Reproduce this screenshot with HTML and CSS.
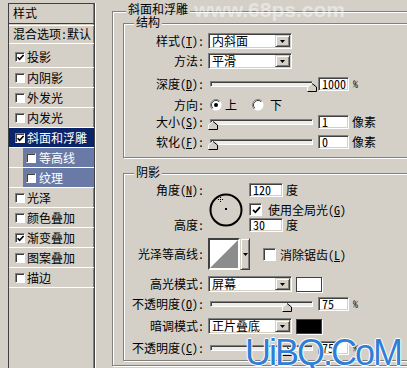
FILE: index.html
```html
<!DOCTYPE html>
<html lang="zh">
<head>
<meta charset="utf-8">
<title>图层样式 - 斜面和浮雕</title>
<link rel="stylesheet" href="styles.css">
</head>
<body>
<div class="dialog">
  <div class="list">
    <div class="list-head">样式</div>
    <div class="item blend">混合选项:默认</div>
    <div class="item tall"><span class="cb"><svg class="chk" width="7" height="7" viewBox="0 0 7 7"><path d="M0.5 3.2 L2.6 5.4 L6.6 1" fill="none" stroke="#000" stroke-width="1.6"/></svg></span>投影</div>
    <div class="item"><span class="cb"></span>内阴影</div>
    <div class="item"><span class="cb"></span>外发光</div>
    <div class="item"><span class="cb"></span>内发光</div>
    <div class="item sel"><span class="cb"><svg class="chk" width="7" height="7" viewBox="0 0 7 7"><path d="M0.5 3.2 L2.6 5.4 L6.6 1" fill="none" stroke="#000" stroke-width="1.6"/></svg></span>斜面和浮雕</div>
    <div class="item sub"><div class="sub-inner"><span class="cb"></span>等高线</div></div>
    <div class="item sub"><div class="sub-inner"><span class="cb"></span>纹理</div></div>
    <div class="item"><span class="cb"></span>光泽</div>
    <div class="item"><span class="cb"></span>颜色叠加</div>
    <div class="item"><span class="cb"><svg class="chk" width="7" height="7" viewBox="0 0 7 7"><path d="M0.5 3.2 L2.6 5.4 L6.6 1" fill="none" stroke="#000" stroke-width="1.6"/></svg></span>渐变叠加</div>
    <div class="item"><span class="cb"></span>图案叠加</div>
    <div class="item"><span class="cb"></span>描边</div>
  </div>

  <div class="main">
    <div class="group outer">
      <div class="legend l-outer">斜面和浮雕</div>

      <div class="group inner struct">
        <div class="legend l-inner">结构</div>

        <div class="row h16 first">
          <div class="lbl">样式(<u>T</u>):</div>
          <div class="select"><span class="sel-text">内斜面</span><span class="btn"><svg width="5" height="3" viewBox="0 0 5 3"><path d="M0 0H5L2.5 3Z"/></svg></span></div>
        </div>
        <div class="row h16 m4">
          <div class="lbl">方法:</div>
          <div class="select"><span class="sel-text">平滑</span><span class="btn"><svg width="5" height="3" viewBox="0 0 5 3"><path d="M0 0H5L2.5 3Z"/></svg></span></div>
        </div>
        <div class="row h14 m8">
          <div class="lbl">深度(<u>D</u>):</div>
          <div class="slider"><div class="track"></div><svg class="thumb" style="left:99px" width="10" height="9" viewBox="0 0 10 9"><path d="M0.5 8.5V4L5 0.5L9.5 4V8.5Z" fill="#d4d0c8"/><path d="M0.5 8.5V4L5 0.5" fill="none" stroke="#fff"/><path d="M5 0.5L9.5 4V8.5H0.5" fill="none" stroke="#000"/></svg></div>
          <div class="num">1000</div>
          <div class="unit pct">%</div>
        </div>
        <div class="row h14 m7">
          <div class="lbl">方向:</div>
          <svg class="radio r-first" width="12" height="12" viewBox="0 0 12 12"><circle cx="6" cy="6" r="5.5" fill="#fff"/><path d="M9.9 2.1A5.5 5.5 0 0 0 2.1 9.9" fill="none" stroke="#808080"/><path d="M9.2 2.8A4.5 4.5 0 0 0 2.8 9.2" fill="none" stroke="#404040"/><circle cx="6" cy="6" r="2" fill="#000"/></svg>
          <span class="rlabel">上</span>
          <svg class="radio r-second" width="12" height="12" viewBox="0 0 12 12"><circle cx="6" cy="6" r="5.5" fill="#fff"/><path d="M9.9 2.1A5.5 5.5 0 0 0 2.1 9.9" fill="none" stroke="#808080"/><path d="M9.2 2.8A4.5 4.5 0 0 0 2.8 9.2" fill="none" stroke="#404040"/></svg>
          <span class="rlabel r2">下</span>
        </div>
        <div class="row h14 m3">
          <div class="lbl">大小(<u>S</u>):</div>
          <div class="slider"><div class="track"></div><svg class="thumb" style="left:0px" width="10" height="9" viewBox="0 0 10 9"><path d="M0.5 8.5V4L5 0.5L9.5 4V8.5Z" fill="#d4d0c8"/><path d="M0.5 8.5V4L5 0.5" fill="none" stroke="#fff"/><path d="M5 0.5L9.5 4V8.5H0.5" fill="none" stroke="#000"/></svg></div>
          <div class="num">1</div>
          <div class="unit">像素</div>
        </div>
        <div class="row h14 m6">
          <div class="lbl">软化(<u>F</u>):</div>
          <div class="slider"><div class="track"></div><svg class="thumb" style="left:0px" width="10" height="9" viewBox="0 0 10 9"><path d="M0.5 8.5V4L5 0.5L9.5 4V8.5Z" fill="#d4d0c8"/><path d="M0.5 8.5V4L5 0.5" fill="none" stroke="#fff"/><path d="M5 0.5L9.5 4V8.5H0.5" fill="none" stroke="#000"/></svg></div>
          <div class="num">0</div>
          <div class="unit">像素</div>
        </div>
      </div>

      <div class="group inner shadow">
        <div class="legend l-inner">阴影</div>

        <div class="angle-grid">
          <div class="lbl ga">角度(<u>N</u>):</div>
          <svg class="dial" width="34" height="34" viewBox="0 0 34 34">
            <circle cx="17" cy="17" r="15.5" fill="none" stroke="#000" stroke-width="2"/>
            <path d="M9 6.5H14M11.5 4V9" stroke="#000" stroke-width="1" stroke-dasharray="1 1"/>
            <rect x="16" y="15" width="2" height="2" fill="#000"/>
          </svg>
          <div class="cell c1"><div class="num n0">120</div><span class="unit">度</span></div>
          <div class="cell c2"><span class="cb big"><svg class="chk" width="9" height="8" viewBox="0 0 9 8"><path d="M1 3.8 L3.4 6.3 L8 1.2" fill="none" stroke="#000" stroke-width="1.8"/></svg></span><span class="cbtext">使用全局光(<u>G</u>)</span></div>
          <div class="lbl gc">高度:</div>
          <div class="cell c3"><div class="num n0">30</div><span class="unit">度</span></div>
        </div>

        <div class="row h32 m6">
          <div class="lbl">光泽等高线:</div>
          <div class="contour"><svg width="28" height="28" viewBox="0 0 28 28"><rect width="28" height="28" fill="#fff"/><path d="M0 28L28 0V28Z" fill="#8c8c8c"/></svg></div>
          <span class="btn tallbtn"><svg width="5" height="3" viewBox="0 0 5 3"><path d="M0 0H5L2.5 3Z"/></svg></span>
          <span class="cb big aa"></span><span class="cbtext">消除锯齿(<u>L</u>)</span>
        </div>
        <div class="row h16 m6">
          <div class="lbl">高光模式:</div>
          <div class="select"><span class="sel-text">屏幕</span><span class="btn"><svg width="5" height="3" viewBox="0 0 5 3"><path d="M0 0H5L2.5 3Z"/></svg></span></div>
          <div class="swatch white"></div>
        </div>
        <div class="row h14 m5">
          <div class="lbl">不透明度(<u>O</u>):</div>
          <div class="slider"><div class="track"></div><svg class="thumb" style="left:74px" width="10" height="9" viewBox="0 0 10 9"><path d="M0.5 8.5V4L5 0.5L9.5 4V8.5Z" fill="#d4d0c8"/><path d="M0.5 8.5V4L5 0.5" fill="none" stroke="#fff"/><path d="M5 0.5L9.5 4V8.5H0.5" fill="none" stroke="#000"/></svg></div>
          <div class="num">75</div>
          <div class="unit pct">%</div>
        </div>
        <div class="row h16 m7">
          <div class="lbl">暗调模式:</div>
          <div class="select"><span class="sel-text">正片叠底</span><span class="btn"><svg width="5" height="3" viewBox="0 0 5 3"><path d="M0 0H5L2.5 3Z"/></svg></span></div>
          <div class="swatch black"></div>
        </div>
        <div class="row h14 m7">
          <div class="lbl">不透明度(<u>C</u>):</div>
          <div class="slider"><div class="track"></div><svg class="thumb" style="left:74px" width="10" height="9" viewBox="0 0 10 9"><path d="M0.5 8.5V4L5 0.5L9.5 4V8.5Z" fill="#d4d0c8"/><path d="M0.5 8.5V4L5 0.5" fill="none" stroke="#fff"/><path d="M5 0.5L9.5 4V8.5H0.5" fill="none" stroke="#000"/></svg></div>
          <div class="num">75</div>
          <div class="unit pct">%</div>
        </div>
      </div>
    </div>
  </div>
</div>
<div class="wm wm68">www.68ps.com</div>
<div class="wm wmuibq">UiBQ.CoM</div>
</body>
</html>
```

FILE: styles.css
```css
* { box-sizing: border-box; }

body {
  margin: 0;
  width: 407px;
  height: 368px;
  overflow: hidden;
  position: relative;
  background: #d4d0c8;
  color: #000;
  font-family: "Noto Sans CJK SC", "Noto Sans", sans-serif;
  font-size: 12px;
  line-height: 14px;
  font-feature-settings: "hwid" 1;
}

u { text-decoration-thickness: 1px; text-underline-offset: 1px; }

.dialog {
  display: flex;
  align-items: flex-start;
  height: 368px;
  overflow: hidden;
}

/* ---------- left style list ---------- */
.list {
  flex: none;
  width: 87px;
  height: 380px;
  margin: 3px 0 0 8px;
  border: 1px solid #404040;
  border-bottom: 0;
  box-shadow: inset -1px 0 0 #808080, 1px 0 0 #fff;
}

.list-head {
  height: 20px;
  padding: 2px 0 0 4px;
  border-bottom: 1px solid #404040;
}

.item {
  display: flex;
  align-items: center;
  height: 20px;
  border-bottom: 1px solid #fff;
}

.item.blend {
  height: 19px;
  margin-top: 1px;
  border-top: 1px solid #fff;
  padding: 0 0 1px 4px;
}

.item.tall {
  height: 24px;
  padding-top: 2px;
}

.cb {
  flex: none;
  display: flex;
  align-items: center;
  justify-content: center;
  width: 10px;
  height: 10px;
  margin: 0 2px 0 6px;
  background: #fff;
  border: 1px solid;
  border-color: #808080 #fff #fff #808080;
  box-shadow: inset 1px 1px 0 #404040;
}

.cb .chk { margin: 1px 0 0 1px; }

.item.sel {
  background: #0a246a;
  color: #fff;
}

.sub-inner {
  flex: 1;
  align-self: stretch;
  display: flex;
  align-items: center;
  margin-left: 14px;
  padding-left: 3px;
  background: #6a7aa6;
  color: #fff;
}

.sub-inner .cb { margin: 0 3px 0 0; }

/* ---------- right panel ---------- */
.main {
  flex: none;
  margin: 11px 0 0 17px;
}

.group {
  border: 1px solid #808080;
  box-shadow: inset 1px 1px 0 #fff, 1px 1px 0 #fff;
}

.outer {
  width: 300px;
  padding: 0 0 4px 10px;
}

.inner { width: 285px; }

.legend {
  display: block;
  width: fit-content;
  padding: 0 2px;
  background: #d4d0c8;
  line-height: 14px;
}

.l-outer { margin: -10px 0 0 3px; }
.l-inner { margin: -9px 0 0 10px; }

.struct {
  margin-top: 7px;
  padding-bottom: 8px;
}

.shadow {
  margin-top: 15px;
  padding-bottom: 5px;
}

.row {
  display: flex;
  align-items: center;
}

.h14 { height: 14px; }
.h16 { height: 16px; }
.h32 { height: 32px; }
.first { margin-top: 4px; }
.m3 { margin-top: 3px; }
.m4 { margin-top: 4px; }
.m5 { margin-top: 5px; }
.m6 { margin-top: 6px; }
.m7 { margin-top: 7px; }
.m8 { margin-top: 8px; }

.lbl {
  flex: none;
  width: 80px;
  margin-right: 4px;
  text-align: right;
  white-space: nowrap;
}

/* combo box */
.select {
  flex: none;
  display: flex;
  width: 84px;
  height: 16px;
  padding: 1px;
  background: #fff;
  border: 1px solid;
  border-color: #808080 #fff #fff #808080;
  box-shadow: inset 1px 1px 0 #404040, inset -1px -1px 0 #d4d0c8;
}

.sel-text {
  flex: 1;
  padding-left: 2px;
  line-height: 12px;
  white-space: nowrap;
}

.btn {
  flex: none;
  display: flex;
  align-items: center;
  justify-content: center;
  width: 15px;
  background: #d4d0c8;
  border: 1px solid;
  border-color: #d4d0c8 #404040 #404040 #d4d0c8;
  box-shadow: inset 1px 1px 0 #fff, inset -1px -1px 0 #808080;
}

.btn svg { fill: #000; }

/* slider */
.slider {
  flex: none;
  position: relative;
  width: 105px;
  height: 14px;
}

.track {
  width: 103px;
  height: 6px;
  margin: 4px 0 0 2px;
  background: #eeece8;
  border: 1px solid;
  border-color: #808080 #fff #fff #808080;
  box-shadow: inset 1px 1px 0 #404040;
}

.thumb {
  position: absolute;
  top: 6px;
  display: block;
}

/* number field */
.num {
  flex: none;
  width: 31px;
  height: 14px;
  margin-left: 5px;
  padding-left: 3px;
  background: #fff;
  border: 1px solid;
  border-color: #808080 #fff #fff #808080;
  box-shadow: inset 1px 1px 0 #404040, inset -1px -1px 0 #d4d0c8;
  line-height: 12px;
}

.num.n0 { margin-left: 0; width: 34px; }

.unit {
  flex: none;
  margin-left: 3px;
  white-space: nowrap;
}

.unit.pct { margin-left: 4px; font-size: 10px; }

/* radio */
.radio { flex: none; display: block; }
.r-first { margin-left: 2px; }
.rlabel { margin-left: 3px; }
.r-second { margin-left: 15px; }
.rlabel.r2 { margin-left: 6px; }

/* angle block */
.angle-grid {
  display: grid;
  grid-template-columns: 84px 41px auto;
  grid-template-rows: 14px 21px 14px;
  margin-top: 4px;
}

.ga { grid-column: 1; grid-row: 1; align-self: center; }
.gc { grid-column: 1; grid-row: 3; align-self: center; }

.dial {
  grid-column: 2;
  grid-row: 1 / 4;
  margin: 10px 0 0 1px;
  display: block;
}

.cell { display: flex; align-items: center; grid-column: 3; }
.c1 { grid-row: 1; }
.c2 { grid-row: 2; align-items: flex-start; padding-top: 6px; }
.c3 { grid-row: 3; }

.cb.big {
  width: 13px;
  height: 13px;
  margin: 0;
}

.cbtext { margin-left: 6px; white-space: nowrap; line-height: 13px; }

/* contour */
.contour {
  flex: none;
  width: 32px;
  height: 32px;
  border: 2px solid;
  border-color: #404040 #fff #fff #404040;
}

.contour svg { display: block; }

.tallbtn {
  align-self: stretch;
  width: 10px;
}

.cb.aa { margin-left: 13px; }
.aa + .cbtext { margin-left: 4px; }

/* color swatches */
.swatch {
  flex: none;
  width: 26px;
  height: 15px;
  margin-left: 4px;
  border: 1px solid #404040;
  box-shadow: 1px 1px 0 #fff;
}

.swatch.white { background: #fff; }
.swatch.black { background: #000; }

/* watermarks */
.wm {
  position: absolute;
  white-space: nowrap;
  font-family: "Liberation Sans", Arial, sans-serif;
  font-feature-settings: normal;
}

.wm68 {
  left: 194px;
  top: -1px;
  font-size: 21px;
  line-height: 21px;
  font-weight: bold;
  color: rgba(255, 255, 255, 0.45);
}

.wmuibq {
  left: 245px;
  top: 335px;
  font-size: 36px;
  line-height: 36px;
  letter-spacing: -2px;
  color: #2f7fd6;
  text-shadow: 1px 0 0 #fff, -1px 0 0 #fff, 0 1px 0 #fff, 0 -1px 0 #fff;
}
```
